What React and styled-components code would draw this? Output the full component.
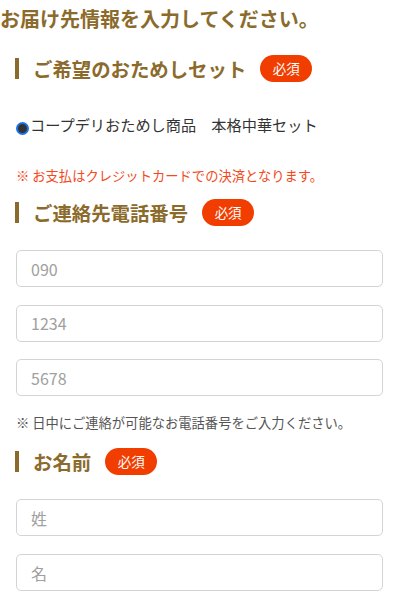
import React from "react";
import styled, { createGlobalStyle } from "styled-components";

const GlobalStyle = createGlobalStyle`
  html, body {
    margin: 0;
    padding: 0;
    background: #fff;
  }
  body {
    font-family: "Noto Sans CJK JP", "Noto Sans", sans-serif;
    color: #333;
  }
`;

const Page = styled.div`
  width: 400px;
  padding-top: 6px;
`;

const Title = styled.h1`
  margin: 0;
  font-size: 20px;
  line-height: 26px;
  font-weight: bold;
  color: #8b6b2c;
`;

const Section = styled.section`
  padding: 0 17px 0 16px;
`;

const Heading = styled.div`
  display: flex;
  align-items: center;
  margin-top: ${(p) => p.$top}px;
`;

const HeadingText = styled.h2`
  margin: 0 0 0 -1px;
  padding-left: 14px;
  border-left: 4px solid #8b6b2c;
  font-size: 19.4px;
  line-height: 21px;
  font-weight: bold;
  color: #8b6b2c;
`;

const Badge = styled.span`
  display: inline-flex;
  align-items: center;
  justify-content: center;
  width: 52px;
  height: 27px;
  margin-left: 14px;
  border-radius: 14px;
  background: #f23d00;
  color: #fff;
  font-size: 13.5px;
  line-height: 1;
`;

const RadioRow = styled.label`
  display: flex;
  align-items: flex-start;
  margin-top: 32px;
  font-size: 15.2px;
  line-height: 20px;
  color: #333;
`;

const RadioDot = styled.span`
  flex: none;
  box-sizing: border-box;
  width: 13px;
  height: 13px;
  margin-top: 8px;
  margin-right: 1px;
  border-radius: 50%;
  background: #333;
  border: 2px solid #1a73e8;
`;

const Note = styled.p`
  margin: ${(p) => p.$top}px 0 0;
  font-size: 13.3px;
  line-height: 18px;
  color: ${(p) => p.$color};
`;

const Field = styled.input`
  display: block;
  box-sizing: border-box;
  width: 100%;
  height: 37px;
  margin-top: ${(p) => p.$top}px;
  padding: 0 14px;
  border: 1.5px solid #d4d4d4;
  border-radius: 5px;
  background: #fff;
  font-family: "Noto Sans CJK JP", "Noto Sans", sans-serif;
  font-size: 16px;
  color: #333;
  outline: none;

  &::placeholder {
    color: #a0a0a0;
  }
`;

export default function App() {
  return (
    <Page>
      <GlobalStyle />
      <Title>お届け先情報を入力してください。</Title>
      <Section>
        <Heading $top={23}>
          <HeadingText>ご希望のおためしセット</HeadingText>
          <Badge>必須</Badge>
        </Heading>
        <RadioRow>
          <RadioDot />
          コープデリおためし商品　本格中華セット
        </RadioRow>
        <Note $top={32} $color="#f24a1c">
          ※ お支払はクレジットカードでの決済となります。
        </Note>
        <Heading $top={14}>
          <HeadingText>ご連絡先電話番号</HeadingText>
          <Badge>必須</Badge>
        </Heading>
        <Field $top={24} placeholder="090" />
        <Field $top={17.5} placeholder="1234" />
        <Field $top={17.5} placeholder="5678" />
        <Note $top={18} $color="#555">
          ※ 日中にご連絡が可能なお電話番号をご入力ください。
        </Note>
        <Heading $top={16}>
          <HeadingText>お名前</HeadingText>
          <Badge>必須</Badge>
        </Heading>
        <Field $top={24} placeholder="姓" />
        <Field $top={18} placeholder="名" />
      </Section>
    </Page>
  );
}
